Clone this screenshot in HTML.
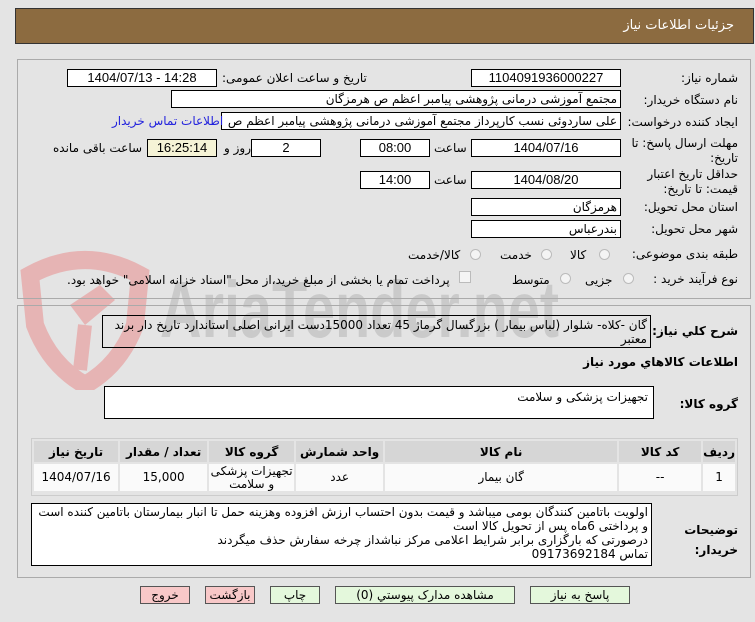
<!DOCTYPE html>
<html><head><meta charset="utf-8"><style>
body{margin:0;width:755px;height:622px;background:#e4e4e4;font-family:Tahoma,"DejaVu Sans","Noto Sans CJK SC",sans-serif;font-size:12px;color:#000;position:relative;overflow:hidden}
div{box-sizing:border-box}
.a{position:absolute}
.f{position:absolute;background:#fff;border:1px solid #000;height:18px;line-height:16px;text-align:center;white-space:nowrap;overflow:hidden;font-family:"Liberation Sans","DejaVu Sans",sans-serif;font-size:13px}
.r{text-align:right;padding-right:3px;font-family:"DejaVu Sans",sans-serif;font-size:12px}
.l{position:absolute;direction:rtl;text-align:right;white-space:nowrap;font-family:"DejaVu Sans",sans-serif;font-size:12px}
.b{font-weight:bold}
.rad{position:absolute;width:11px;height:11px;border-radius:50%;border:1px solid #bbb;background:#f4f4f4}
.btn{position:absolute;height:18px;border:1px solid #555;line-height:16px;text-align:center;font-family:"DejaVu Sans",sans-serif;font-size:12px;top:586px}
table{border-collapse:separate;border-spacing:2px;font-family:"DejaVu Sans",sans-serif;font-size:12px;direction:rtl}
th{background:#d6d6d6;font-weight:bold;height:21px;padding:0}
td{background:#fafafa;text-align:center;height:27px;padding:0;line-height:13px}
</style></head><body>
<div class="a" style="left:15px;top:8px;width:739px;height:36px;background:#8c6b40;border:1px solid #333"></div>
<div class="l" style="right:21px;top:18px;color:#fff;font-size:13px">جزئیات اطلاعات نیاز</div>

<!-- watermark -->
<svg class="a" style="left:20px;top:245px" width="130" height="145" viewBox="0 0 130 145"><path d="M10 30 Q65 0 120 30 L115 80 Q100 120 65 140 Q30 120 15 80 Z" fill="none" stroke="#e6b4b4" stroke-width="18"/><path d="M50 60 L80 40 L95 55 L65 80 Z" fill="#e6b4b4"/><path d="M65 80 L60 125" stroke="#e6b4b4" stroke-width="14"/></svg>
<div class="a" style="left:160px;top:268px;font-family:'Liberation Sans',sans-serif;font-size:80px;font-weight:bold;color:#cacaca;line-height:84px;transform:scaleX(0.72);transform-origin:0 0;white-space:nowrap">AriaTender.net</div>

<div class="a" style="left:17px;top:59px;width:734px;height:240px;border:1px solid #aaa"></div>
<div class="a" style="left:17px;top:305px;width:734px;height:273px;border:1px solid #aaa"></div>

<div class="l" style="right:17px;top:71px">شماره نیاز:</div>
<div class="f" style="left:471px;top:69px;width:150px">1104091936000227</div>
<div class="l" style="left:222px;top:71px">تاریخ و ساعت اعلان عمومی:</div>
<div class="f" style="left:67px;top:69px;width:150px">1404/07/13 - 14:28</div>

<div class="l" style="right:17px;top:93px">نام دستگاه خریدار:</div>
<div class="f r" style="left:171px;top:90px;width:450px">مجتمع آموزشی درمانی پژوهشی پیامبر اعظم ص  هرمزگان</div>

<div class="l" style="right:17px;top:115px">ایجاد کننده درخواست:</div>
<div class="f r" style="left:221px;top:112px;width:400px">علی ساردوئی نسب کارپرداز مجتمع آموزشی درمانی پژوهشی پیامبر اعظم ص</div>
<div class="l" style="left:112px;top:114px;color:#2222dd">اطلاعات تماس خریدار</div>

<div class="l" style="right:17px;top:136px;line-height:15px">مهلت ارسال پاسخ: تا<br>تاریخ:</div>
<div class="f" style="left:471px;top:139px;width:150px">1404/07/16</div>
<div class="l" style="left:434px;top:141px">ساعت</div>
<div class="f" style="left:360px;top:139px;width:70px">08:00</div>
<div class="f" style="left:251px;top:139px;width:70px">2</div>
<div class="l" style="left:224px;top:141px">روز و</div>
<div class="f" style="left:147px;top:139px;width:70px;background:#f5f3d6">16:25:14</div>
<div class="l" style="left:53px;top:141px">ساعت باقی مانده</div>

<div class="l" style="right:17px;top:167px;line-height:15px">حداقل تاریخ اعتبار<br>قیمت: تا تاریخ:</div>
<div class="f" style="left:471px;top:171px;width:150px">1404/08/20</div>
<div class="l" style="left:434px;top:173px">ساعت</div>
<div class="f" style="left:360px;top:171px;width:70px">14:00</div>

<div class="l" style="right:17px;top:200px">استان محل تحویل:</div>
<div class="f r" style="left:471px;top:198px;width:150px">هرمزگان</div>
<div class="l" style="right:17px;top:222px">شهر محل تحویل:</div>
<div class="f r" style="left:471px;top:220px;width:150px">بندرعباس</div>

<div class="l" style="right:17px;top:247px">طبقه بندی موضوعی:</div>
<div class="rad" style="left:599px;top:249px"></div><div class="l" style="left:570px;top:248px">کالا</div>
<div class="rad" style="left:541px;top:249px"></div><div class="l" style="left:500px;top:248px">خدمت</div>
<div class="rad" style="left:470px;top:249px"></div><div class="l" style="left:408px;top:248px">کالا/خدمت</div>

<div class="l" style="right:17px;top:272px">نوع فرآیند خرید :</div>
<div class="rad" style="left:623px;top:273px"></div><div class="l" style="left:585px;top:273px">جزیی</div>
<div class="rad" style="left:560px;top:273px"></div><div class="l" style="left:512px;top:273px">متوسط</div>
<div class="a" style="left:459px;top:271px;width:12px;height:12px;border:1px solid #bbb;background:#f4f4f4"></div>
<div class="l" style="left:67px;top:273px">پرداخت تمام یا بخشی از مبلغ خرید،از محل "اسناد خزانه اسلامی" خواهد بود.</div>

<div class="l b" style="right:17px;top:324px">شرح کلي نياز:</div>
<div class="a" style="left:102px;top:315px;width:549px;height:33px;border:1px solid #000;direction:rtl;text-align:right;padding:2px 3px;line-height:14px;font-family:'DejaVu Sans',sans-serif;font-size:12px">گان -کلاه- شلوار (لباس بیمار ) بزرگسال  گرماژ 45 تعداد 15000دست  ایرانی  اصلی  استاندارد تاریخ  دار  برند معتبر</div>
<div class="l b" style="right:17px;top:355px">اطلاعات کالاهاي مورد نياز</div>

<div class="l b" style="right:17px;top:397px">گروه کالا:</div>
<div class="a" style="left:104px;top:386px;width:550px;height:33px;border:1px solid #000;background:#fff;direction:rtl;text-align:right;padding:3px 5px;font-family:'DejaVu Sans',sans-serif;font-size:12px">تجهیزات پزشکی و سلامت</div>

<div class="a" style="left:31px;top:438px;width:707px;height:58px;border:1px solid #ccc">
<table style="width:705px"><tr><th style="width:27px">ردیف</th><th style="width:82px">کد کالا</th><th style="width:232px">نام کالا</th><th style="width:87px">واحد شمارش</th><th style="width:85px">گروه کالا</th><th style="width:87px">تعداد / مقدار</th><th>تاریخ نیاز</th></tr>
<tr><td>1</td><td>--</td><td>گان بیمار</td><td>عدد</td><td>تجهیزات پزشکی و سلامت</td><td>15,000</td><td>1404/07/16</td></tr></table></div>

<div class="l b" style="right:17px;top:520px;line-height:20px">توضیحات<br>خریدار:</div>
<div class="a" style="left:31px;top:503px;width:621px;height:63px;border:1px solid #000;background:#fff;direction:rtl;text-align:right;padding:1px 3px;line-height:14px;font-family:'DejaVu Sans',sans-serif;font-size:12px">اولویت باتامین کنندگان بومی میباشد و قیمت بدون احتساب ارزش افزوده وهزینه حمل تا انبار بیمارستان باتامین کننده است و پرداختی 6ماه پس از تحویل کالا است<br>درصورتی که بارگزاری برابر شرایط اعلامی مرکز نباشداز چرخه سفارش حذف میگردند<br>تماس 09173692184</div>

<div class="btn" style="left:530px;width:100px;background:#e4f8dc">پاسخ به نیاز</div>
<div class="btn" style="left:335px;width:180px;background:#e4f8dc">مشاهده مدارک پیوستي (0)</div>
<div class="btn" style="left:270px;width:50px;background:#e4f8dc">چاپ</div>
<div class="btn" style="left:205px;width:50px;background:#f8c8c8">بازگشت</div>
<div class="btn" style="left:140px;width:50px;background:#f8c8c8">خروج</div>
</body></html>
